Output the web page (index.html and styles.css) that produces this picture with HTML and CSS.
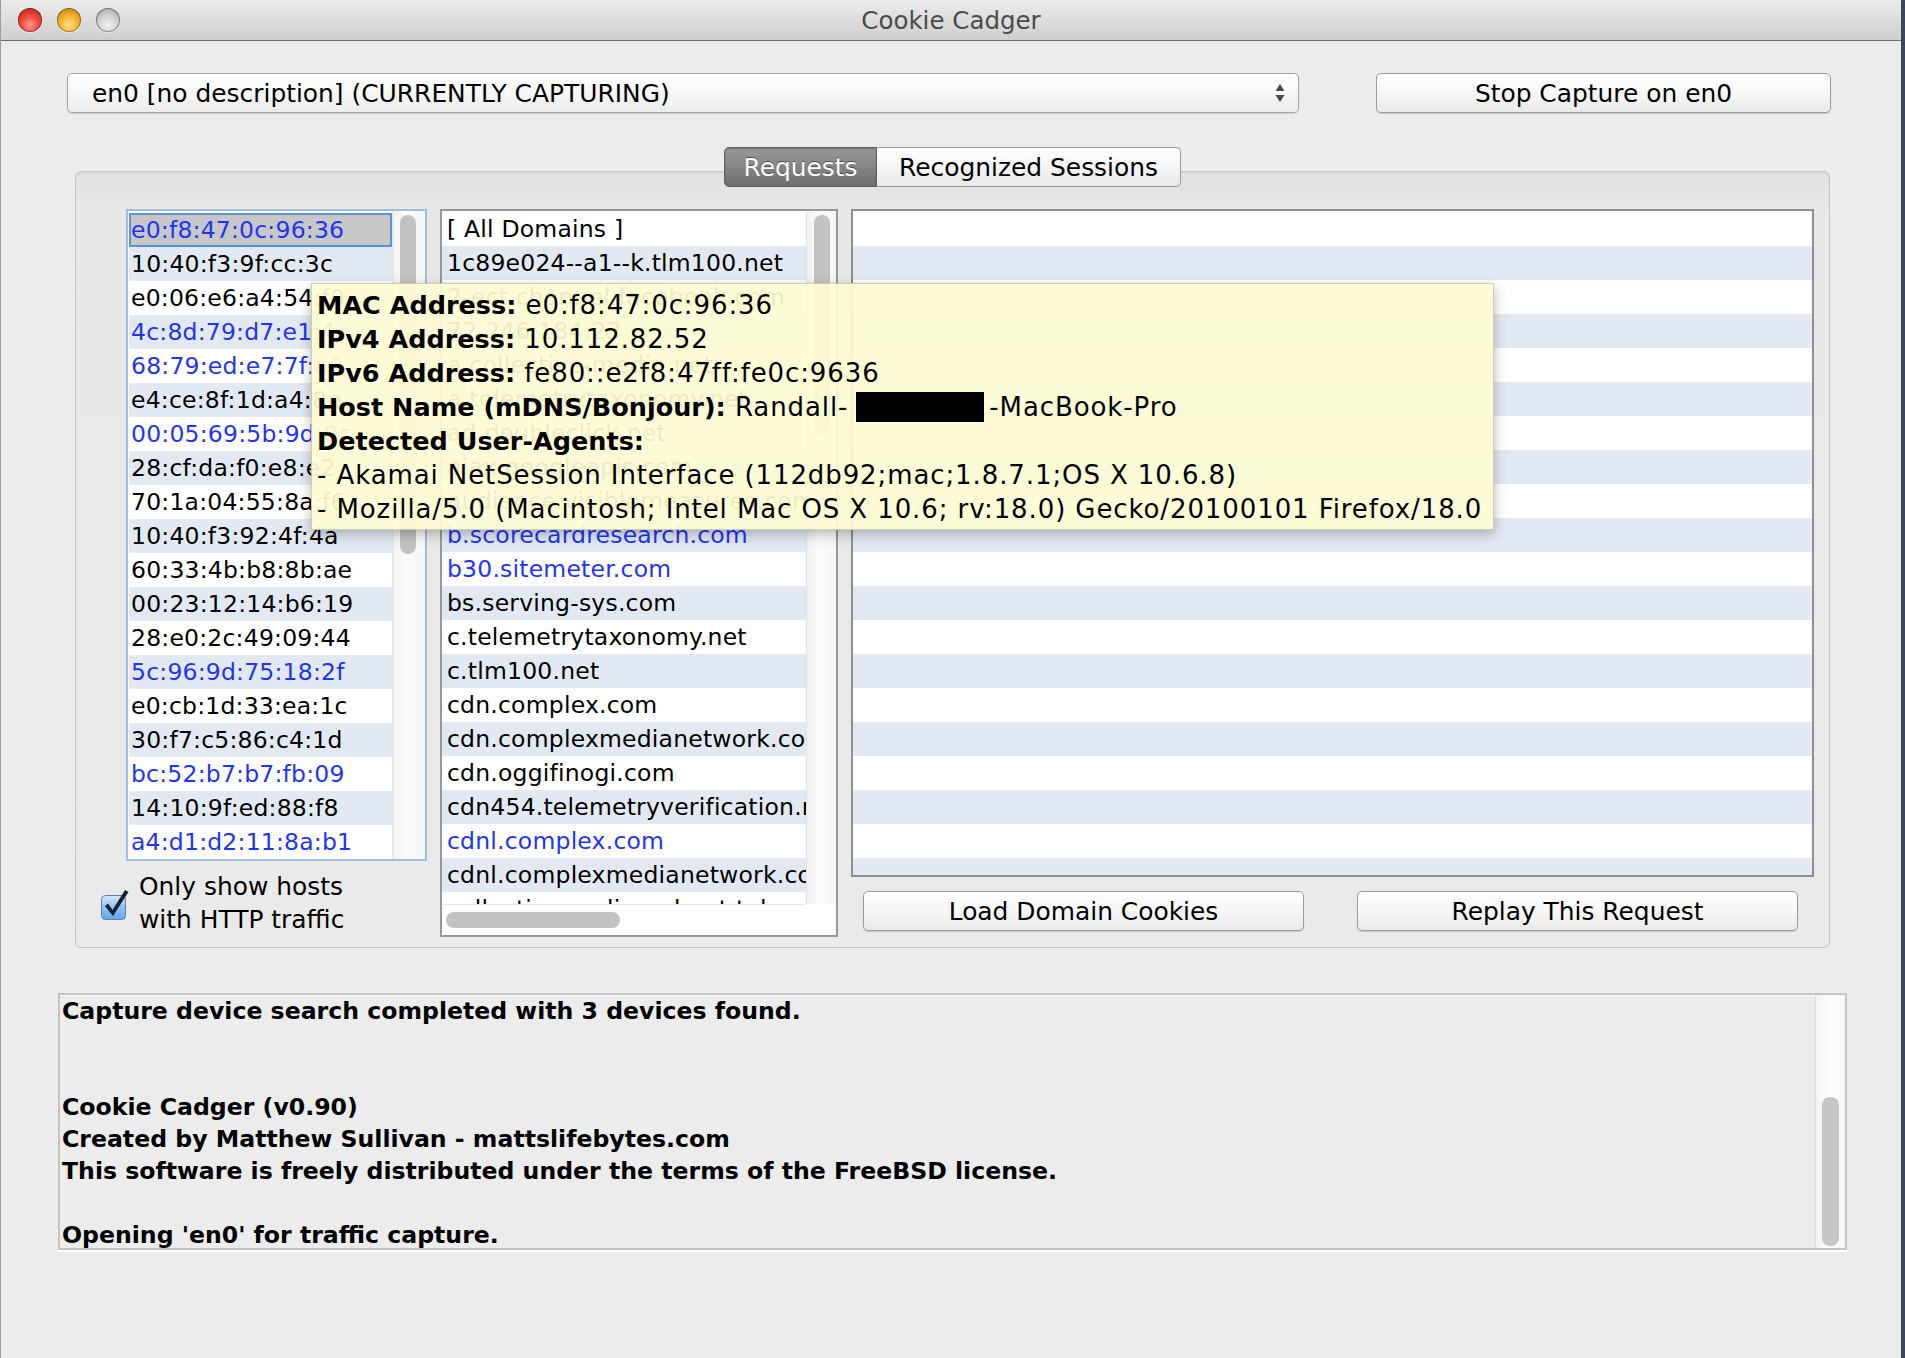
FILE: index.html
```html
<!DOCTYPE html>
<html>
<head>
<meta charset="utf-8">
<title>Cookie Cadger</title>
<link rel="stylesheet" href="styles.css">
</head>
<body>
<div class="window">
  <div class="titlebar">
    <div class="lights">
      <span class="light red"></span>
      <span class="light yellow"></span>
      <span class="light grey"></span>
    </div>
    <div class="title">Cookie Cadger</div>
    <div></div>
  </div>

  <div class="toprow">
    <div class="combo">
      <span>en0 [no description] (CURRENTLY CAPTURING)</span>
      <svg class="updown" width="12" height="20" viewBox="0 0 12 20"><path d="M6 1 L10.5 8 L1.5 8 Z" fill="#4a4a4a"/><path d="M6 19 L10.5 12 L1.5 12 Z" fill="#4a4a4a"/></svg>
    </div>
    <div class="btn stop">Stop Capture on en0</div>
  </div>

  <div class="tabs">
    <span class="tab active">Requests</span><span class="tab">Recognized Sessions</span>
  </div>

  <div class="pane">
    <div class="col-hosts">
      <div class="list hosts">
        <ul class="rows">
          <li class="sel blue">e0:f8:47:0c:96:36</li>
          <li>10:40:f3:9f:cc:3c</li>
          <li>e0:06:e6:a4:54:f0</li>
          <li class="blue">4c:8d:79:d7:e1:4c</li>
          <li class="blue">68:79:ed:e7:7f:a2</li>
          <li>e4:ce:8f:1d:a4:8e</li>
          <li class="blue">00:05:69:5b:9d:0c</li>
          <li>28:cf:da:f0:e8:e2</li>
          <li>70:1a:04:55:8a:f6</li>
          <li>10:40:f3:92:4f:4a</li>
          <li>60:33:4b:b8:8b:ae</li>
          <li>00:23:12:14:b6:19</li>
          <li>28:e0:2c:49:09:44</li>
          <li class="blue">5c:96:9d:75:18:2f</li>
          <li>e0:cb:1d:33:ea:1c</li>
          <li>30:f7:c5:86:c4:1d</li>
          <li class="blue">bc:52:b7:b7:fb:09</li>
          <li>14:10:9f:ed:88:f8</li>
          <li class="blue">a4:d1:d2:11:8a:b1</li>
        </ul>
        <div class="vtrack"><div class="thumb hosts-thumb"></div></div>
      </div>
      <div class="check">
        <svg class="checkbox" width="30" height="34" viewBox="0 0 30 34">
          <defs>
            <linearGradient id="cbg" x1="0" y1="0" x2="0" y2="1">
              <stop offset="0" stop-color="#d3e8fb"/>
              <stop offset="0.5" stop-color="#8fc2f2"/>
              <stop offset="1" stop-color="#5fa6ea"/>
            </linearGradient>
          </defs>
          <rect x="1.5" y="8.5" width="24" height="24" rx="4" fill="url(#cbg)" stroke="#5f80a8" stroke-width="1"/>
          <path d="M5 19 L8 16.5 L12.5 23 L25 3 L28.5 5 L13 29 Z" fill="#17202e"/>
        </svg>
        <span class="check-label">Only show hosts<br>with HTTP traffic</span>
      </div>
    </div>

    <div class="list domains">
      <ul class="rows">
        <li>[ All Domains ]</li>
        <li>1c89e024--a1--k.tlm100.net</li>
        <li>2-ect.channel.facebook.com</li>
        <li>72.246.184.23</li>
        <li>a.collective-media.net</li>
        <li>a.telemetrytaxonomy.net</li>
        <li>ad.doubleclick.net</li>
        <li>ajax.googleapis.com</li>
        <li>audience.visiblemeasures.com</li>
        <li class="blue">b.scorecardresearch.com</li>
        <li class="blue">b30.sitemeter.com</li>
        <li>bs.serving-sys.com</li>
        <li>c.telemetrytaxonomy.net</li>
        <li>c.tlm100.net</li>
        <li>cdn.complex.com</li>
        <li>cdn.complexmedianetwork.com</li>
        <li>cdn.oggifinogi.com</li>
        <li>cdn454.telemetryverification.net</li>
        <li class="blue">cdnl.complex.com</li>
        <li>cdnl.complexmedianetwork.com</li>
        <li>collectivemedia-pubnet.telemetry.com</li>
      </ul>
      <div class="vtrack"><div class="thumb dom-thumb"></div></div>
      <div class="htrack"><div class="hthumb"></div></div>
      <div class="corner"></div>
    </div>

    <div class="col-req">
      <div class="reqtable">
        <div class="rrow"></div><div class="rrow"></div><div class="rrow"></div><div class="rrow"></div>
        <div class="rrow"></div><div class="rrow"></div><div class="rrow"></div><div class="rrow"></div>
        <div class="rrow"></div><div class="rrow"></div><div class="rrow"></div><div class="rrow"></div>
        <div class="rrow"></div><div class="rrow"></div><div class="rrow"></div><div class="rrow"></div>
        <div class="rrow"></div><div class="rrow"></div><div class="rrow"></div><div class="rrow"></div>
      </div>
      <div class="btnrow">
        <div class="btn wide">Load Domain Cookies</div>
        <div class="btn wide">Replay This Request</div>
      </div>
    </div>
  </div>

  <div class="log">
    <div class="logtext">
      <p>Capture device search completed with 3 devices found.</p>
      <p>&nbsp;</p>
      <p>&nbsp;</p>
      <p>Cookie Cadger (v0.90)</p>
      <p>Created by Matthew Sullivan - mattslifebytes.com</p>
      <p>This software is freely distributed under the terms of the FreeBSD license.</p>
      <p>&nbsp;</p>
      <p>Opening 'en0' for traffic capture.</p>
    </div>
    <div class="logtrack"><div class="logthumb"></div></div>
  </div>

  <div class="tooltip">
    <p><b>MAC Address:</b> e0:f8:47:0c:96:36</p>
    <p><b>IPv4 Address:</b> 10.112.82.52</p>
    <p><b>IPv6 Address:</b> fe80::e2f8:47ff:fe0c:9636</p>
    <p><b>Host Name (mDNS/Bonjour):</b> Randall-<span class="redact"></span>-MacBook-Pro</p>
    <p><b>Detected User-Agents:</b></p>
    <p>- Akamai NetSession Interface (112db92;mac;1.8.7.1;OS X 10.6.8)</p>
    <p>- Mozilla/5.0 (Macintosh; Intel Mac OS X 10.6; rv:18.0) Gecko/20100101 Firefox/18.0</p>
  </div>
</div>
</body>
</html>
```

FILE: styles.css
```css
* { box-sizing: border-box; margin: 0; padding: 0; }
html, body { width: 1905px; height: 1358px; overflow: hidden; }
body {
  background: #3b4660;
  font-family: "DejaVu Sans", "Noto Sans", sans-serif;
  color: #000;
}
ul { list-style: none; }

.window {
  position: relative;
  width: 1901px;
  height: 1358px;
  background: #ececec;
  border-left: 1px solid #9c9c9c;
  display: flex;
  flex-direction: column;
}

/* ---------- title bar ---------- */
.titlebar {
  flex: none;
  height: 41px;
  display: grid;
  grid-template-columns: 1fr auto 1fr;
  align-items: center;
  background: linear-gradient(#ececec, #dadada 60%, #cfcfcf);
  border-bottom: 1px solid #6c6c6c;
  border-radius: 7px 7px 0 0;
}
.lights { display: flex; gap: 15px; padding-left: 17px; }
.light {
  width: 24px; height: 24px; border-radius: 50%;
  box-shadow: inset 0 0 0 1px rgba(0,0,0,.35), 0 1px 1px rgba(255,255,255,.6);
}
.red { background: radial-gradient(circle at 50% 70%, #ff9a8f 0, #f0453c 45%, #b3211b 100%); }
.yellow { background: radial-gradient(circle at 50% 70%, #ffe08a 0, #f5b12c 45%, #b57410 100%); }
.grey { background: radial-gradient(circle at 50% 70%, #f2f2f2 0, #d2d2d2 45%, #9a9a9a 100%); }
.title { font-size: 24.5px; color: #4b4b4b; }

/* ---------- top row ---------- */
.toprow {
  flex: none;
  display: flex;
  gap: 77px;
  height: 40px;
  margin-top: 32px;
  padding-left: 66px;
}
.combo {
  width: 1232px;
  height: 40px;
  display: flex;
  align-items: center;
  justify-content: space-between;
  padding: 0 12px 0 24px;
  border: 1px solid #a3a3a3;
  border-radius: 5px;
  background: linear-gradient(#ffffff, #f6f6f6 50%, #ececec);
  box-shadow: 0 1px 1px rgba(0,0,0,.12);
  font-size: 24.9px;
}
.btn {
  display: flex;
  align-items: center;
  justify-content: center;
  height: 40px;
  border: 1px solid #9b9b9b;
  border-radius: 5px;
  background: linear-gradient(#ffffff, #f7f7f7 50%, #e9e9e9);
  box-shadow: 0 1px 1px rgba(0,0,0,.15);
  font-size: 24.9px;
}
.stop { width: 455px; }

/* ---------- tabs ---------- */
.tabs {
  flex: none;
  position: relative;
  z-index: 2;
  display: flex;
  justify-content: center;
  margin: 34px 71px 0 74px;
  height: 40px;
}
.tab {
  display: flex;
  align-items: center;
  justify-content: center;
  height: 40px;
  font-size: 24.9px;
  border: 1px solid #9a9a9a;
  background: linear-gradient(#ffffff, #f5f5f5 50%, #e8e8e8);
  width: 304px;
  border-radius: 0 5px 5px 0;
  border-left: none;
}
.tab.active {
  width: 153px;
  color: #fff;
  border: 1px solid #5f5f5f;
  border-radius: 5px 0 0 5px;
  background: linear-gradient(#9a9a9a, #848484 50%, #6f6f6f);
  text-shadow: 0 -1px 0 rgba(0,0,0,.45);
  box-shadow: inset 0 1px 2px rgba(0,0,0,.25);
}

/* ---------- pane ---------- */
.pane {
  flex: none;
  display: flex;
  gap: 13px;
  height: 777px;
  margin: -16px 71px 0 74px;
  padding: 37px 13px 0 24px;
  border: 1px solid #c6c6c6;
  border-radius: 6px;
  background: linear-gradient(#e0e0e0, #e8e8e8 34px, #eaeaea);
  box-shadow: inset 0 1px 2px rgba(0,0,0,.06);
}

.list {
  background: #fff;
  border: 2px solid #989898;
  font-size: 23.5px;
  letter-spacing: 0.2px;
  overflow: hidden;
}
.rows li {
  height: 34px;
  line-height: 34px;
  white-space: nowrap;
  overflow: hidden;
  padding-left: 2px;
}
.rows li:nth-child(even) { background: #e3e9f3; }
.rows li.blue { color: #1f35f4; }

.col-hosts { width: 327px; flex: none; }
.hosts {
  display: flex;
  width: 301px;
  height: 652px;
  margin-left: 26px;
  border: 2px solid #9fbddd;
  padding: 2px 0 0 1px;
}
.hosts .rows { flex: 1; }
.rows li.sel {
  background: #c7c7c7;
  border: 2px solid #5d92d6;
  line-height: 30px;
  padding-left: 0;
}
.vtrack {
  background: linear-gradient(to right, #f1f1f1, #fbfbfb 40%, #f6f6f6);
  border-left: 1px solid #e2e2e2;
  padding: 0 7px;
}
.hosts .vtrack { width: 33px; flex: none; margin-top: -2px; padding-top: 4px; }
.thumb { width: 16px; border-radius: 8px; background: #c2c2c2; }
.hosts-thumb { height: 339px; }

.check {
  display: flex;
  align-items: center;
  gap: 9px;
  margin-top: 9px;
}
.checkbox { flex: none; margin-top: 2px; }
.check-label { font-size: 24.9px; line-height: 33px; }

.domains {
  width: 398px;
  height: 728px;
  flex: none;
  display: grid;
  grid-template-columns: 1fr 30px;
  grid-template-rows: 1fr 31px;
  padding-top: 1px;
}
.domains .rows { overflow: hidden; }
.domains .rows li { padding-left: 5px; }
.domains .vtrack { padding-top: 3px; }
.dom-thumb { height: 220px; }
.htrack {
  background: #fff;
  border-top: 1px solid #e6e6e6;
  padding: 7px 0 0 4px;
}
.hthumb { width: 174px; height: 16px; border-radius: 8px; background: #c2c2c2; }
.corner { background: #fff; }

.col-req { width: 963px; flex: none; }
.reqtable {
  height: 668px;
  background: #fff;
  border: 2px solid #8f8f8f;
  padding-top: 1px;
  overflow: hidden;
}
.rrow { height: 34px; }
.rrow:nth-child(even) { background: #e3e9f3; }
.btnrow {
  display: flex;
  gap: 53px;
  margin-top: 14px;
  padding-left: 12px;
}
.btn.wide { width: 441px; }

/* ---------- log ---------- */
.log {
  flex: none;
  display: flex;
  width: 1789px;
  height: 257px;
  margin: 45px 0 0 57px;
  border: 2px solid #c4c4c4;
  box-shadow: 0 2px 0 #ffffff, inset 0 1px 0 #ffffff;
  background: #ececec;
}
.logtext {
  flex: 1;
  padding: 0 0 0 2px;
  font-weight: bold;
  font-size: 23.6px;
  line-height: 32px;
}
.logtrack {
  width: 30px;
  flex: none;
  display: flex;
  flex-direction: column;
  justify-content: flex-end;
  align-items: center;
  padding-bottom: 2px;
  background: linear-gradient(to right, #f3f3f3, #fdfdfd 50%, #f7f7f7);
  border-left: 1px solid #dddddd;
}
.logthumb { width: 17px; height: 149px; border-radius: 8px; background: #c6c6c6; }

/* ---------- tooltip (overlay) ---------- */
.tooltip {
  position: absolute;
  left: 310px;
  top: 283px;
  z-index: 10;
  width: 1183px;
  height: 247px;
  padding: 4px 0 0 5px;
  background: rgba(254, 252, 212, 0.93);
  border: 1px solid rgba(0,0,0,.18);
  box-shadow: 0 4px 12px rgba(0,0,0,.28);
  font-size: 26px;
  letter-spacing: 0.9px;
  line-height: 34px;
  white-space: nowrap;
}
.tooltip b { font-size: 25.5px; letter-spacing: 0; }
.redact {
  display: inline-block;
  width: 128px;
  height: 30px;
  background: #000;
  vertical-align: -6px;
  margin-left: 8px;
  margin-right: 5px;
}
```
